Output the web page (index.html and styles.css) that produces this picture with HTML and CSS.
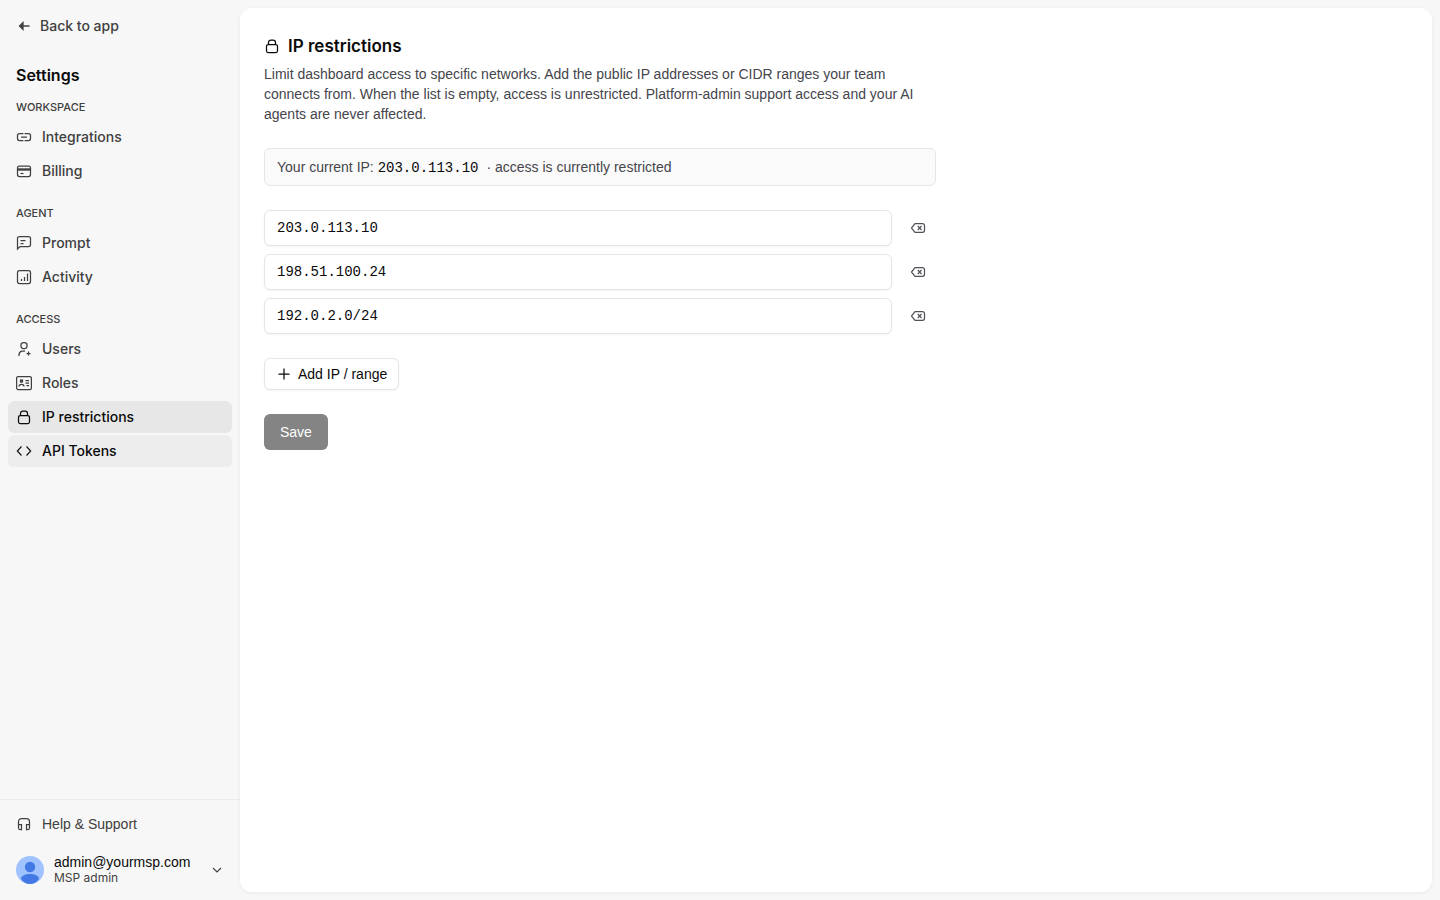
FILE: index.html
```
<!DOCTYPE html>
<html lang="en">
<head>
    <meta charset="UTF-8">
    <meta name="viewport" content="width=device-width, initial-scale=1.0">
    <title>IP restrictions</title>
    <link rel="stylesheet" href="styles.css">
</head>
<body>
    <aside class="sidebar">
        <a href="#" class="back">
            <svg class="icon" viewBox="0 0 16 16"><path d="M13.500 8H4" stroke-width="1.500"/><path d="M7 4.500v7L3.500 8z" fill="currentColor"/></svg>
            Back to app
        </a>
        <h2>Settings</h2>
        <nav>
            <section>
                <h3>Workspace</h3>
                <a href="#" class="item">
                    <svg class="icon" viewBox="0 0 16 16"><path d="M7.400 4.500H3.500a2 2 0 0 0-2 2v3a2 2 0 0 0 2 2h3.900M8.600 4.500h3.900a2 2 0 0 1 2 2v3a2 2 0 0 1-2 2H8.600M5 8h6"/></svg>
                    Integrations
                </a>
                <a href="#" class="item">
                    <svg class="icon" viewBox="0 0 16 16"><rect x="1.500" y="3" width="13" height="10.500" rx="2"/><path d="M2 6.500h12" stroke-width="2.400"/><path d="M4.500 10.500h3"/></svg>
                    Billing
                </a>
            </section>
            <section>
                <h3>Agent</h3>
                <a href="#" class="item">
                    <svg class="icon" viewBox="0 0 16 16"><path d="M1.500 14V3.500a2 2 0 0 1 2-2h9a2 2 0 0 1 2 2v6a2 2 0 0 1-2 2H4zM4.500 5.500h5M4.500 8.500h3"/></svg>
                    Prompt
                </a>
                <a href="#" class="item">
                    <svg class="icon" viewBox="0 0 16 16"><rect x="1.500" y="1.500" width="13" height="13" rx="2"/><path d="M5.500 12V10M8.500 12V8M11.500 12V4.500"/></svg>
                    Activity
                </a>
            </section>
            <section>
                <h3>Access</h3>
                <a href="#" class="item">
                    <svg class="icon" viewBox="0 0 16 16"><rect x="5" y="1.500" width="6" height="6" rx="2.500"/><path d="M3 15v-1a4 4 0 0 1 3-3.800h3M12.500 10.500v4M10.500 12.500h4"/></svg>
                    Users
                </a>
                <a href="#" class="item">
                    <svg class="icon" viewBox="0 0 16 16"><rect x=".6" y="1.500" width="14.800" height="13" rx="1.500"/><rect x="4.500" y="5" width="2" height="2"/><path d="M3 11.500c0-3 5-3 5 0M9.500 5.500H13M9.500 8H13M10.500 10.500H13"/></svg>
                    Roles
                </a>
                <a href="#" class="item active">
                    <svg class="icon" viewBox="0 0 16 16"><rect x="2.500" y="6.500" width="11" height="8" rx="1.800"/><path d="M4.500 6.500V4.500a2.500 2.500 0 0 1 2.500-2.500h2a2.500 2.500 0 0 1 2.500 2.500v2"/></svg>
                    IP restrictions
                </a>
                <a href="#" class="item hovered">
                    <svg class="icon thin" viewBox="0 0 16 16"><path d="M5.500 3.500L1.300 8l4.200 4.500M10.500 3.500L14.700 8l-4.200 4.500"/></svg>
                    API Tokens
                </a>
            </section>
        </nav>
        <footer>
            <a href="#" class="item help">
                <svg class="icon" viewBox="0 0 16 16"><path d="M2.500 9V5.500a3 3 0 0 1 3-3h5a3 3 0 0 1 3 3V9M2.500 8.500h3v5h-1.500a1.500 1.500 0 0 1-1.500-1.500zM13.500 8.500h-3v5H12a1.500 1.500 0 0 0 1.500-1.500z"/></svg>
                Help &amp; Support
            </a>
            <button type="button" class="account">
                <svg class="avatar" viewBox="0 0 28 28"><circle cx="14" cy="14" r="14" fill="#a0c3ff"/><circle cx="14" cy="11" r="5.200" fill="#4279e4"/><path d="M5 23c0-3 4-5 9-5s9 2 9 5c-2 3-5.500 5-9 5s-7-2-9-5z" fill="#4279e4"/></svg>
                <span class="who">
                    <span class="email">admin@yourmsp.com</span>
                    <span class="role">MSP admin</span>
                </span>
                <svg class="icon thin chevron" viewBox="0 0 16 16"><path d="M4 6l4 4l4-4"/></svg>
            </button>
        </footer>
    </aside>
    <main>
        <div class="content">
            <header>
                <h1>
                    <svg class="icon" viewBox="0 0 16 16"><rect x="2.500" y="6.500" width="11" height="8" rx="1.800"/><path d="M4.500 6.500V4.500a2.500 2.500 0 0 1 2.500-2.500h2a2.500 2.500 0 0 1 2.500 2.500v2"/></svg>
                    IP restrictions
                </h1>
                <p>Limit dashboard access to specific networks. Add the public IP addresses or CIDR ranges your team connects from. When the list is empty, access is unrestricted. Platform-admin support access and your AI agents are never affected.</p>
            </header>
            <div class="notice">Your current IP: <code>203.0.113.10</code> <span>· access is currently restricted</span></div>
            <form>
                <div class="ranges">
                    <div class="range">
                        <input type="text" aria-label="IP or range 1" value="203.0.113.10">
                        <button type="button" class="remove" aria-label="Remove 203.0.113.10">
                            <svg class="icon" viewBox="0 0 16 16"><path d="M5 3.700h7.500a2 2 0 0 1 2 2v4.600a2 2 0 0 1-2 2H5L1.500 8z"/><path d="M7.800 6l3.700 4M11.500 6L7.800 10"/></svg>
                        </button>
                    </div>
                    <div class="range">
                        <input type="text" aria-label="IP or range 2" value="198.51.100.24">
                        <button type="button" class="remove" aria-label="Remove 198.51.100.24">
                            <svg class="icon" viewBox="0 0 16 16"><path d="M5 3.700h7.500a2 2 0 0 1 2 2v4.600a2 2 0 0 1-2 2H5L1.500 8z"/><path d="M7.800 6l3.700 4M11.500 6L7.800 10"/></svg>
                        </button>
                    </div>
                    <div class="range">
                        <input type="text" aria-label="IP or range 3" value="192.0.2.0/24">
                        <button type="button" class="remove" aria-label="Remove 192.0.2.0/24">
                            <svg class="icon" viewBox="0 0 16 16"><path d="M5 3.700h7.500a2 2 0 0 1 2 2v4.600a2 2 0 0 1-2 2H5L1.500 8z"/><path d="M7.800 6l3.700 4M11.500 6L7.800 10"/></svg>
                        </button>
                    </div>
                </div>
                <button type="button" class="add">
                    <svg class="icon" viewBox="0 0 16 16"><path d="M8 2.500v11M2.500 8h11"/></svg>
                    Add IP / range
                </button>
                <button type="submit" class="save" disabled>Save</button>
            </form>
        </div>
    </main>
</body>
</html>
```

FILE: styles.css
```
* {
    box-sizing: border-box;
}

body {
    display: flex;
    min-height: 100vh;
    margin: 0;
    background: #f7f7f7;
    color: #0a0a0a;
    font-family: "Liberation Sans", Arial, sans-serif;
    font-size: 14px;
    line-height: 20px;
}

h1, h2, h3, p {
    margin: 0;
}

h1, h2, h3, .back, .item, .role {
    font-family: Inter, "Liberation Sans", sans-serif;
}

a {
    color: inherit;
    text-decoration: none;
}

button, input {
    font: inherit;
    color: inherit;
}

.icon {
    width: 16px;
    height: 16px;
    flex: none;
    fill: none;
    stroke: currentColor;
    stroke-width: 1.25;
}

    .icon.thin {
        stroke-width: 1.1;
    }

.sidebar {
    display: flex;
    flex-direction: column;
    width: 240px;
    flex: none;
}

.back {
    display: flex;
    align-items: center;
    gap: 8px;
    padding: 16px 16px 0;
    color: #404040;
    font-weight: 500;
}

.sidebar h2 {
    padding: 27px 16px 0;
    font-size: 16px;
    font-weight: 600;
    line-height: 24px;
}

nav {
    display: flex;
    flex-direction: column;
    gap: 14px;
    padding: 8px;
}

section {
    display: flex;
    flex-direction: column;
    gap: 2px;
}

h3 {
    padding: 4px 8px;
    color: #404040;
    font-size: 11px;
    font-weight: 500;
    line-height: 16px;
    text-transform: uppercase;
}

.item {
    display: flex;
    align-items: center;
    gap: 10px;
    height: 32px;
    padding: 0 8px;
    border-radius: 6px;
    color: #404040;
    font-weight: 500;
}

    .item.active {
        background: #e7e7e7;
        color: #0a0a0a;
    }

    .item.hovered {
        background: #ededed;
        color: #0a0a0a;
    }

    .item.help {
        font-family: "Liberation Sans", Arial, sans-serif;
        font-weight: 400;
    }

.sidebar footer {
    display: flex;
    flex-direction: column;
    gap: 8px;
    margin-top: auto;
    padding: 8px;
    border-top: 1px solid #ebebeb;
}

.account {
    display: flex;
    align-items: center;
    gap: 10px;
    height: 44px;
    padding: 0 7px 0 8px;
    border: 0;
    background: none;
    text-align: left;
}

.avatar {
    width: 28px;
    height: 28px;
    flex: none;
}

.chevron {
    color: #404040;
}

.who {
    display: flex;
    flex-direction: column;
    flex: 1;
}

.email {
    line-height: 16px;
}

.role {
    color: #404040;
    font-size: 12px;
    line-height: 16px;
}

main {
    flex: 1;
    margin: 8px 8px 8px 0;
    padding: 24px;
    border-radius: 12px;
    background: #fff;
    box-shadow: 0 1px 4px rgba(0, 0, 0, 0.06);
}

.content {
    display: flex;
    flex-direction: column;
    gap: 24px;
    max-width: 672px;
}

h1 {
    display: flex;
    align-items: center;
    gap: 8px;
    font-size: 17px;
    font-weight: 600;
    line-height: 28px;
}

header p {
    margin-top: 4px;
    color: #45454c;
}

.notice {
    padding: 8px 12px;
    border: 1px solid #e5e5e5;
    border-radius: 6px;
    background: #fafafa;
    color: #45454c;
}

    .notice code {
        margin-right: 4px;
        color: #0a0a0a;
        line-height: 16px;
    }

code, input {
    font-family: "Liberation Mono", monospace;
    font-size: 14px;
}

form {
    display: flex;
    flex-direction: column;
    align-items: flex-start;
    gap: 24px;
}

.ranges {
    display: flex;
    flex-direction: column;
    gap: 8px;
    width: 100%;
}

.range {
    display: flex;
    gap: 8px;
}

    .range input {
        flex: 1;
        min-width: 0;
        height: 36px;
        padding: 0 12px;
        border: 1px solid #e5e5e5;
        border-radius: 6px;
        background: #fff;
        box-shadow: 0 1px 2px rgba(0, 0, 0, 0.05);
    }

.remove {
    display: grid;
    place-items: center;
    width: 36px;
    height: 36px;
    padding: 0;
    border: 0;
    background: none;
    color: #52525b;
}

.add {
    display: flex;
    align-items: center;
    gap: 6px;
    height: 32px;
    padding: 0 11px;
    border: 1px solid #e5e5e5;
    border-radius: 6px;
    background: #fff;
    box-shadow: 0 1px 2px rgba(0, 0, 0, 0.05);
}

.save {
    height: 36px;
    padding: 0 16px;
    border: 0;
    border-radius: 6px;
    background: #848484;
    color: #fff;
}
```
